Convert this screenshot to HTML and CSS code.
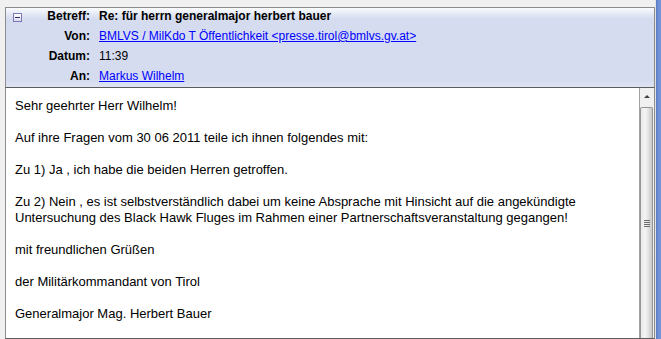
FILE: index.html
```html
<!DOCTYPE html>
<html lang="de">
<head>
    <meta charset="UTF-8">
    <title>Re: für herrn generalmajor herbert bauer</title>
    <link rel="stylesheet" href="styles.css">
</head>
<body>
    <div class="window">
        <div class="header">
            <span class="toggle"></span>
            <span class="label">Betreff:</span>
            <span class="value subject">Re: für herrn generalmajor herbert bauer</span>

            <span></span>
            <span class="label">Von:</span>
            <span class="value"><a href="#">BMLVS / MilKdo T Öffentlichkeit &lt;presse.tirol@bmlvs.gv.at&gt;</a></span>

            <span></span>
            <span class="label">Datum:</span>
            <span class="value">11:39</span>

            <span></span>
            <span class="label">An:</span>
            <span class="value"><a href="#">Markus Wilhelm</a></span>
        </div>

        <div class="message">
            <div class="text">
                <p>Sehr geehrter Herr Wilhelm!</p>
                <p>Auf ihre Fragen vom 30 06 2011 teile ich ihnen folgendes mit:</p>
                <p>Zu 1) Ja , ich habe die beiden Herren getroffen.</p>
                <p>Zu 2) Nein , es ist selbstverständlich dabei um keine Absprache mit Hinsicht auf die angekündigte<br>Untersuchung des Black Hawk Fluges im Rahmen einer Partnerschaftsveranstaltung gegangen!</p>
                <p>mit freundlichen Grüßen</p>
                <p>der Militärkommandant von Tirol</p>
                <p>Generalmajor Mag. Herbert Bauer</p>
            </div>
            <div class="scrollbar">
                <div class="arrow"></div>
                <div class="thumb">
                    <div class="grip"></div>
                </div>
            </div>
        </div>
    </div>
    <div class="edge"></div>
</body>
</html>
```

FILE: styles.css
```css
* {
    margin: 0;
    padding: 0;
    box-sizing: border-box;
}

body {
    display: flex;
    height: 339px;
    background: #f0f0f0;
    font-family: 'Liberation Sans', Arial, sans-serif;
    color: #000;
    overflow: hidden;
}

a {
    color: #0000ff;
}

.window {
    flex: 1;
    display: flex;
    flex-direction: column;
    padding: 7px 0 1px 5px;
}

/* header block */
.header {
    display: grid;
    grid-template-columns: 9px 68px 1fr;
    row-gap: 6px;
    padding: 1px 0 4px 7px;
    font-size: 12px;
    line-height: 14px;
    border: 1px solid #8c8c8c;
    border-bottom-color: #5c5c5c;
    background: linear-gradient(#fbfcfe 0px, #e4e9f5 6px, #d5dcef 11px, #d5dcef 72px, #dde3f2 79px);
}

.toggle {
    width: 9px;
    height: 9px;
    margin-top: 4px;
    border: 1px solid #7b78b8;
    background: linear-gradient(#ffffff, #dcdcf0);
    position: relative;
}

.toggle::after {
    content: '';
    position: absolute;
    left: 1px;
    right: 1px;
    top: 3px;
    height: 1px;
    background: #303060;
}

.label {
    font-weight: bold;
    text-align: right;
}

.value {
    padding-left: 9px;
    white-space: nowrap;
}

.subject {
    font-weight: bold;
}

/* message body */
.message {
    flex: 1;
    display: flex;
    background: #fff;
    border: 1px solid #8c8c8c;
    border-top: none;
    border-bottom-color: #5c5c5c;
}

.text {
    flex: 1;
    padding: 10px 0 0 9px;
    font-size: 13px;
    line-height: 16px;
}

.text p {
    margin-bottom: 16px;
    white-space: nowrap;
}

.scrollbar {
    width: 15px;
    display: flex;
    flex-direction: column;
    background: #f0f0f0;
    border-left: 1px solid #a0a0a0;
}

.arrow {
    height: 18px;
    position: relative;
}

.arrow::after {
    content: '';
    position: absolute;
    left: 4px;
    top: 7px;
    border-left: 3px solid transparent;
    border-right: 3px solid transparent;
    border-bottom: 3px solid #404040;
}

.thumb {
    flex: 1;
    margin: 1px 1px 0 0;
    border: 1px solid #969696;
    border-bottom: none;
    border-radius: 2px 2px 0 0;
    background: linear-gradient(90deg, #eaeaea, #f4f4f4 40%, #dcdcdc 75%, #c8c8c8);
    display: flex;
    align-items: center;
    justify-content: center;
}

.grip {
    width: 6px;
    height: 7px;
    background: repeating-linear-gradient(#6a6a6a 0 1px, transparent 1px 2px);
}

.edge {
    width: 6px;
    border-left: 1px solid #e4e4e4;
    background: linear-gradient(90deg, #5878c0, #6e90d6 40%, #7697da);
}
```
